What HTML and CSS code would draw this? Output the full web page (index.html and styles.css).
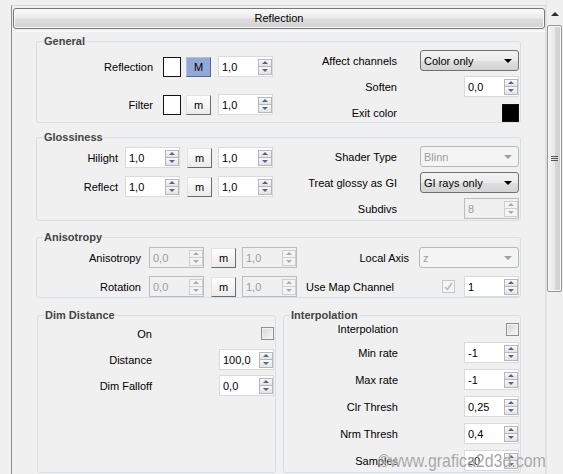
FILE: index.html
```html
<!DOCTYPE html>
<html>
<head>
    <meta charset="UTF-8">
    <title>Reflection</title>
    <link rel="stylesheet" href="styles.css">
</head>
<body>
    <div class="window">
        <div class="rollouts">
            <div class="rollout">
                <div class="rollout-title">Reflection</div>
                <div class="rollout-body">

                    <fieldset class="group g-general">
                        <legend>General</legend>
                        <div class="cols">
                            <div class="col col-left">
                                <div class="row">
                                    <span class="lbl">Reflection</span>
                                    <span class="swatch"></span>
                                    <span class="mbtn on">M</span>
                                    <span class="spin"><span class="val">1,0</span><span class="arrows"><i class="up"></i><i class="dn"></i></span></span>
                                </div>
                                <div class="row">
                                    <span class="lbl">Filter</span>
                                    <span class="swatch"></span>
                                    <span class="mbtn">m</span>
                                    <span class="spin"><span class="val">1,0</span><span class="arrows"><i class="up"></i><i class="dn"></i></span></span>
                                </div>
                            </div>
                            <div class="col col-right">
                                <div class="row">
                                    <span class="lbl">Affect channels</span>
                                    <span class="ctl"><span class="combo"><span>Color only</span><b class="arrow"></b></span></span>
                                </div>
                                <div class="row">
                                    <span class="lbl">Soften</span>
                                    <span class="ctl"><span class="spin"><span class="val">0,0</span><span class="arrows"><i class="up"></i><i class="dn"></i></span></span></span>
                                </div>
                                <div class="row">
                                    <span class="lbl">Exit color</span>
                                    <span class="ctl"><span class="swatch black"></span></span>
                                </div>
                            </div>
                        </div>
                    </fieldset>

                    <fieldset class="group g-gloss">
                        <legend>Glossiness</legend>
                        <div class="cols">
                            <div class="col col-left">
                                <div class="row">
                                    <span class="lbl">Hilight</span>
                                    <span class="spin"><span class="val">1,0</span><span class="arrows"><i class="up"></i><i class="dn"></i></span></span>
                                    <span class="mbtn">m</span>
                                    <span class="spin"><span class="val">1,0</span><span class="arrows"><i class="up"></i><i class="dn"></i></span></span>
                                </div>
                                <div class="row">
                                    <span class="lbl">Reflect</span>
                                    <span class="spin"><span class="val">1,0</span><span class="arrows"><i class="up"></i><i class="dn"></i></span></span>
                                    <span class="mbtn">m</span>
                                    <span class="spin"><span class="val">1,0</span><span class="arrows"><i class="up"></i><i class="dn"></i></span></span>
                                </div>
                            </div>
                            <div class="col col-right">
                                <div class="row">
                                    <span class="lbl">Shader Type</span>
                                    <span class="ctl"><span class="combo off"><span>Blinn</span><b class="arrow"></b></span></span>
                                </div>
                                <div class="row">
                                    <span class="lbl">Treat glossy as GI</span>
                                    <span class="ctl"><span class="combo"><span>GI rays only</span><b class="arrow"></b></span></span>
                                </div>
                                <div class="row">
                                    <span class="lbl">Subdivs</span>
                                    <span class="ctl"><span class="spin off"><span class="val">8</span><span class="arrows"><i class="up"></i><i class="dn"></i></span></span></span>
                                </div>
                            </div>
                        </div>
                    </fieldset>

                    <fieldset class="group g-aniso">
                        <legend>Anisotropy</legend>
                        <div class="rows">
                            <div class="row">
                                <span class="lbl">Anisotropy</span>
                                <span class="spin off"><span class="val">0,0</span><span class="arrows"><i class="up"></i><i class="dn"></i></span></span>
                                <span class="mbtn">m</span>
                                <span class="spin off"><span class="val">1,0</span><span class="arrows"><i class="up"></i><i class="dn"></i></span></span>
                                <span class="lbl axis">Local Axis</span>
                                <span class="combo off axis-combo"><span>z</span><b class="arrow"></b></span>
                            </div>
                            <div class="row">
                                <span class="lbl">Rotation</span>
                                <span class="spin off"><span class="val">0,0</span><span class="arrows"><i class="up"></i><i class="dn"></i></span></span>
                                <span class="mbtn">m</span>
                                <span class="spin off"><span class="val">1,0</span><span class="arrows"><i class="up"></i><i class="dn"></i></span></span>
                                <span class="map-lbl">Use Map Channel</span>
                                <span class="check off checked">
                                    <svg width="11" height="11" viewBox="0 0 11 11"><path d="M2 6 L4.5 8.5 L9 2" fill="none" stroke="#b4b4b4" stroke-width="1.4"/></svg>
                                </span>
                                <span class="spin"><span class="val">1</span><span class="arrows"><i class="up"></i><i class="dn"></i></span></span>
                            </div>
                        </div>
                    </fieldset>

                    <div class="pair">
                        <fieldset class="group g-dim">
                            <legend>Dim Distance</legend>
                            <div class="rows">
                                <div class="row">
                                    <span class="lbl">On</span>
                                    <span class="ctl"><span class="check"></span></span>
                                </div>
                                <div class="row">
                                    <span class="lbl">Distance</span>
                                    <span class="ctl"><span class="spin"><span class="val">100,0</span><span class="arrows"><i class="up"></i><i class="dn"></i></span></span></span>
                                </div>
                                <div class="row">
                                    <span class="lbl">Dim Falloff</span>
                                    <span class="ctl"><span class="spin"><span class="val">0,0</span><span class="arrows"><i class="up"></i><i class="dn"></i></span></span></span>
                                </div>
                            </div>
                        </fieldset>

                        <fieldset class="group g-interp">
                            <legend>Interpolation</legend>
                            <div class="rows">
                                <div class="row short">
                                    <span class="lbl">Interpolation</span>
                                    <span class="ctl"><span class="check"></span></span>
                                </div>
                                <div class="row">
                                    <span class="lbl">Min rate</span>
                                    <span class="ctl"><span class="spin"><span class="val">-1</span><span class="arrows"><i class="up"></i><i class="dn"></i></span></span></span>
                                </div>
                                <div class="row">
                                    <span class="lbl">Max rate</span>
                                    <span class="ctl"><span class="spin"><span class="val">-1</span><span class="arrows"><i class="up"></i><i class="dn"></i></span></span></span>
                                </div>
                                <div class="row">
                                    <span class="lbl">Clr Thresh</span>
                                    <span class="ctl"><span class="spin"><span class="val">0,25</span><span class="arrows"><i class="up"></i><i class="dn"></i></span></span></span>
                                </div>
                                <div class="row">
                                    <span class="lbl">Nrm Thresh</span>
                                    <span class="ctl"><span class="spin"><span class="val">0,4</span><span class="arrows"><i class="up"></i><i class="dn"></i></span></span></span>
                                </div>
                                <div class="row">
                                    <span class="lbl">Samples</span>
                                    <span class="ctl"><span class="spin"><span class="val">20</span><span class="arrows"><i class="up"></i><i class="dn"></i></span></span></span>
                                </div>
                            </div>
                        </fieldset>
                    </div>

                </div>
            </div>
        </div>

        <div class="scrollbar">
            <div class="sb-up"><b></b></div>
            <div class="sb-thumb"><span class="grip"></span></div>
        </div>
    </div>

    <div class="watermark">©www.grafica2d3d.com</div>
</body>
</html>
```

FILE: styles.css
```css
body {
    margin: 0;
    width: 563px;
    height: 474px;
    overflow: hidden;
    position: relative;
    background-color: #f0f0f0;
    font-family: "Liberation Sans", Arial, sans-serif;
    font-size: 11px;
    color: #000;
}
.window {
    display: flex;
    height: 474px;
}
.rollouts {
    width: 546px;
    height: 474px;
    box-sizing: border-box;
    padding: 5px 0 0 11px;
}
.rollout {
    height: 100%;
    box-sizing: border-box;
    border-left: 1px solid #8d8d8d;
    border-top: 1px solid #d9d9d9;
    border-right: 1px solid #dedede;
}
.rollout-title {
    margin: 2px 0 0 1px;
    height: 21px;
    box-sizing: border-box;
    border: 1px solid #777;
    border-radius: 3px;
    background: linear-gradient(#fbfbfb, #ebebeb 45%, #dcdcdc 55%, #d3d3d3);
    box-shadow: inset 0 0 0 1px #fafafa;
    text-align: center;
    line-height: 19px;
}
.rollout-body {
    margin-top: 2px;
    border-top: 1px solid #fdfdfd;
    padding: 2px 24px 0 24px;
    display: flex;
    flex-direction: column;
}

/* group boxes */
.group {
    margin: 0;
    padding: 0;
    min-width: 0;
    border: 1px solid #d5dfe5;
    border-radius: 3px;
}
.group legend {
    margin-left: 6px;
    padding: 0 1px;
    font-weight: bold;
    line-height: 14px;
    color: #444;
}
.cols {
    display: flex;
}
.col {
    display: flex;
    flex-direction: column;
}
.col-left {
    width: 243px;
}
.col-right {
    flex: 1;
    padding-right: 1px;
}
.row {
    display: flex;
    align-items: center;
    height: 21px;
    flex: none;
}
.lbl {
    flex: none;
    text-align: right;
    white-space: nowrap;
}
.ctl {
    flex: 1;
    display: flex;
    justify-content: flex-end;
    align-items: center;
}
.col-right .lbl { width: 117px; }

.g-general .cols { height: 74px; }
.g-general .col-left { padding-top: 8px; gap: 17px; }
.g-general .col-right { padding-top: 2px; gap: 5px; }
.g-general .col-left .lbl { width: 116px; }
.g-general .swatch { margin-left: 10px; }
.g-general .mbtn { margin-left: 5px; }
.g-general .col-left .spin { margin-left: 7px; }

.g-gloss { margin-top: 7px; }
.g-gloss .cols { height: 76px; }
.g-gloss .col-left { padding-top: 3px; gap: 8px; }
.g-gloss .col-right { padding-top: 2px; gap: 5px; }
.g-gloss .col-left .lbl { width: 81px; }
.g-gloss .col-left .spin { margin-left: 7px; }
.g-gloss .col-left .mbtn { margin-left: 7px; }
.g-gloss .col-left .mbtn + .spin { margin-left: 6px; }

.g-aniso { margin-top: 9px; }
.g-aniso .rows {
    height: 53px;
    box-sizing: border-box;
    padding: 3px 1px 0 0;
    display: flex;
    flex-direction: column;
    gap: 8px;
}
.g-aniso .lbl { width: 104px; }
.g-aniso .spin { margin-left: 8px; }
.g-aniso .mbtn { margin-left: 7px; }
.g-aniso .mbtn + .spin { margin-left: 6px; }
.g-aniso .lbl.axis { width: auto; flex: 1; }
.g-aniso .axis-combo { width: 100px; margin-left: 10px; }
.map-lbl {
    margin-left: 9px;
    margin-right: auto;
    white-space: nowrap;
}
.g-aniso .check + .spin { margin-left: 9px; }

.pair {
    display: flex;
    gap: 7px;
    margin-top: 10px;
}
.g-dim {
    width: 239px;
    margin-left: 1px;
    box-sizing: border-box;
}
.g-interp {
    width: 238px;
    box-sizing: border-box;
}
.g-dim .rows,
.g-interp .rows {
    height: 150px;
    box-sizing: border-box;
    padding-right: 1px;
    display: flex;
    flex-direction: column;
}
.g-dim .rows { padding-top: 1px; gap: 5px; }
.g-interp .rows { gap: 6px; }
.g-dim .lbl,
.g-interp .lbl { width: 114px; }
.row.short { height: 14px; }

/* controls */
.spin {
    display: flex;
    align-items: center;
    width: 55px;
    height: 21px;
    box-sizing: border-box;
    padding-left: 3px;
    border: 1px solid #dadada;
    background-color: #fff;
    flex: none;
}
.spin .arrows {
    margin-left: auto;
    width: 14px;
    height: 16px;
    display: flex;
    flex-direction: column;
}
.spin .arrows i {
    flex: 1;
    box-sizing: border-box;
    border: 1px solid #b7b7b7;
    background: linear-gradient(#f9f9f9, #e3e3e3);
    display: flex;
    align-items: center;
    justify-content: center;
}
.spin .arrows i.dn { border-top: none; }
.spin .arrows i.up::before {
    content: "";
    border-left: 3px solid transparent;
    border-right: 3px solid transparent;
    border-bottom: 3px solid #4f6692;
}
.spin .arrows i.dn::before {
    content: "";
    border-left: 3px solid transparent;
    border-right: 3px solid transparent;
    border-top: 3px solid #4f6692;
}
.spin.off {
    background-color: #f0f0f0;
    border-color: #bcbcbc;
    color: #9c9c9c;
}
.spin.off .arrows i {
    border-color: #cfcfcf;
    background: #f4f4f4;
}
.spin.off .arrows i.up::before { border-bottom-color: #a9a9a9; }
.spin.off .arrows i.dn::before { border-top-color: #a9a9a9; }

.combo {
    display: flex;
    align-items: center;
    width: 99px;
    height: 21px;
    box-sizing: border-box;
    padding: 0 6px 0 3px;
    border: 1px solid #707070;
    border-radius: 3px;
    background: linear-gradient(#f3f3f3, #ebebeb 50%, #dfdfdf 51%, #d3d3d3);
    white-space: nowrap;
    flex: none;
}
.combo .arrow {
    margin-left: auto;
    border-left: 4px solid transparent;
    border-right: 4px solid transparent;
    border-top: 4px solid #000;
}
.combo.off {
    border-color: #b5b9bc;
    background: #f4f4f4;
    color: #9c9c9c;
}
.combo.off .arrow { border-top-color: #a0a0a0; }

.swatch {
    width: 18px;
    height: 20px;
    box-sizing: border-box;
    border: 1px solid #111;
    background-color: #fff;
    flex: none;
}
.swatch.black {
    width: 17px;
    height: 18px;
    background-color: #000;
}
.mbtn {
    display: flex;
    align-items: center;
    justify-content: center;
    width: 25px;
    height: 20px;
    box-sizing: border-box;
    border: 1px solid;
    border-color: #e2e2e2 #6b6b6b #6b6b6b #e2e2e2;
    background: linear-gradient(#fefefe, #ebebeb);
    flex: none;
}
.mbtn.on {
    background: #91a9d4;
    border-color: #aebfdf #56698c #56698c #aebfdf;
}
.check {
    width: 13px;
    height: 13px;
    box-sizing: border-box;
    border: 1px solid #8f8f8f;
    background: linear-gradient(135deg, #d6d6d6, #f6f6f6);
    box-shadow: inset 0 0 0 1px #f2f2f2;
    flex: none;
    display: flex;
    align-items: center;
    justify-content: center;
}
.check.off {
    border-color: #c6c6c6;
    background: #f4f4f4;
    box-shadow: none;
}

/* scrollbar */
.scrollbar {
    width: 17px;
    box-sizing: border-box;
    border-left: 1px solid #e4e4e4;
    display: flex;
    flex-direction: column;
}
.sb-up {
    height: 25px;
    box-sizing: border-box;
    padding-top: 12px;
    display: flex;
    justify-content: center;
}
.sb-up b {
    width: 0;
    height: 0;
    border-left: 4px solid transparent;
    border-right: 4px solid transparent;
    border-bottom: 4px solid #2c2c2c;
}
.sb-thumb {
    width: 15px;
    height: 267px;
    box-sizing: border-box;
    border: 1px solid #979797;
    border-radius: 2px;
    background: linear-gradient(90deg, #f4f4f4, #e8e8e8 50%, #d8d8d8 51%, #cfcfcf);
    box-shadow: inset 0 0 0 1px #f7f7f7;
    display: flex;
    align-items: center;
    justify-content: center;
}
.grip {
    width: 7px;
    height: 5px;
    background: repeating-linear-gradient(#555 0 1px, transparent 1px 2px);
}

.watermark {
    position: absolute;
    left: 378px;
    top: 450px;
    font-size: 19px;
    line-height: 22px;
    transform: scaleX(0.84);
    transform-origin: left center;
    color: rgba(135, 135, 135, 0.75);
    text-shadow: 0 0 1px #fff;
    white-space: nowrap;
}
```
